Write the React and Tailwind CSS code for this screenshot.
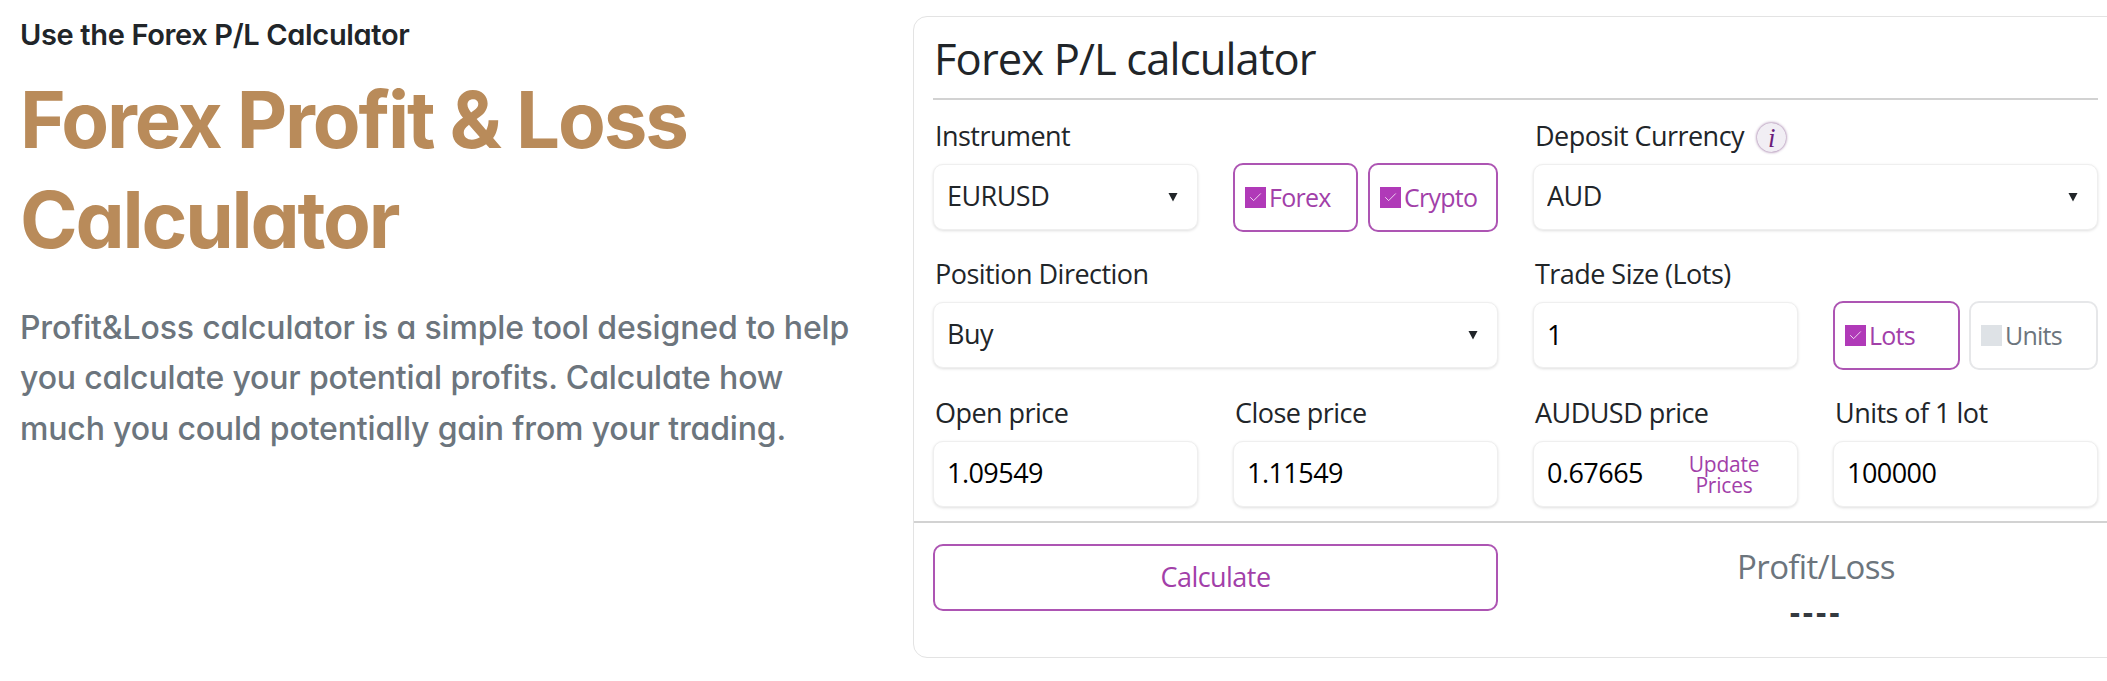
import React from "react";
import { Check } from "lucide-react";

const labelCls = "block h-[28px] pl-[2px] text-[27px] leading-[26px] text-[#212529] mb-[13px] whitespace-nowrap tracking-[-0.02em]";
const boxCls = "h-[66px] w-full rounded-[10px] border border-[#efefef] bg-white shadow-[0_1px_3px_rgba(0,0,0,0.13)] pl-[13px] pb-[2px] text-[27px] text-[#212529] outline-none tracking-[-0.02em]";

function Arrow() {
  return (
    <svg className="absolute right-[20px] top-[28px] pointer-events-none" width="10" height="10" viewBox="0 0 10 10">
      <polygon points="0.5,1 9.5,1 5,9.5" fill="#212529" />
    </svg>
  );
}

function SelectField({ label, value, options, extra }) {
  return (
    <div>
      <label className={labelCls}>
        {label}
        {extra}
      </label>
      <div className="relative">
        <select defaultValue={value} className={boxCls + " appearance-none"}>
          {options.map((o) => (
            <option key={o}>{o}</option>
          ))}
        </select>
        <Arrow />
      </div>
    </div>
  );
}

function InputField({ label, value }) {
  return (
    <div>
      <label className={labelCls}>{label}</label>
      <input defaultValue={value} className={boxCls + " text-black"} />
    </div>
  );
}

function Toggle({ label, checked, width }) {
  return (
    <label
      className={
        "flex items-center h-[69px] rounded-[10px] pl-[10px] text-[25px] tracking-[-0.03em] " +
        width +
        (checked
          ? " border-2 border-[#ad55b3] text-[#a23fa9]"
          : " border-2 border-[#e6e7e9] text-[#6c757d]")
      }
    >
      <span
        className={
          "flex items-center justify-center w-[21px] h-[21px] mr-[3px] " +
          (checked ? "bg-[#b03ab8]" : "bg-[#dee2e6]")
        }
      >
        {checked && <Check size={15} strokeWidth={1.25} className="text-white" />}
      </span>
      {label}
    </label>
  );
}

export default function App() {
  return (
    <div className="flex w-[2107px] h-[681px] overflow-hidden bg-white font-['Open_Sans',sans-serif]">
      <div className="w-[913px] shrink-0 pl-[20px] pt-[16px] font-['Inter',sans-serif] [font-feature-settings:'cv11']">
        <p className="text-[29px] leading-[38px] font-semibold text-[#212529] tracking-[-0.012em]">
          Use the Forex P/L Calculator
        </p>
        <h1 className="mt-[16px] text-[78px] leading-[100px] font-bold text-[#b98b5a] tracking-[-0.028em]">
          Forex Profit &amp; Loss
          <br />
          Calculator
        </h1>
        <p className="mt-[33px] w-[860px] text-[32px] leading-[50.4px] font-medium text-[#6c757d] tracking-[-0.005em]">
          Profit&amp;Loss calculator is a simple tool designed to help
          <br />
          you calculate your potential profits. Calculate how
          <br />
          much you could potentially gain from your trading.
        </p>
      </div>

      <div className="mt-[16px] h-[642px] w-[1300px] shrink-0 rounded-[14px] border border-[#e3e3e3]">
        <div className="ml-[19px] w-[1165px] h-[83px] border-b-2 border-[#d2d2d2] pl-[1px] text-[43.5px] leading-[84px] text-[#212529] tracking-[-0.02em]">
          Forex P/L calculator
        </div>

        <div className="ml-[19px] w-[1165px] mt-[23px] grid grid-cols-2 gap-x-[35px] gap-y-[31.25px]">
          <div className="grid grid-cols-2 gap-x-[35px] items-end">
            <SelectField label="Instrument" value="EURUSD" options={["EURUSD", "GBPUSD", "USDJPY"]} />
            <div className="flex gap-[10px] -mb-[2px]">
              <Toggle label="Forex" checked width="w-[125px]" />
              <Toggle label="Crypto" checked width="w-[130px]" />
            </div>
          </div>
          <SelectField
            label="Deposit Currency"
            value="AUD"
            options={["AUD", "USD", "EUR"]}
            extra={
              <span className="inline-flex items-center justify-center align-top ml-[13px] w-[29px] h-[29px] rounded-full bg-[#f1eef4] shadow-[0_0_3px_rgba(100,40,110,0.85)] font-['Liberation_Serif',serif] italic text-[27px] text-[#6b1d7a]">
                i
              </span>
            }
          />

          <SelectField label="Position Direction" value="Buy" options={["Buy", "Sell"]} />
          <div className="grid grid-cols-2 gap-x-[35px] items-end">
            <InputField label="Trade Size (Lots)" value="1" />
            <div className="flex gap-[9px] -mb-[2px]">
              <Toggle label="Lots" checked width="w-[127px]" />
              <Toggle label="Units" width="w-[129px]" />
            </div>
          </div>

          <div className="grid grid-cols-2 gap-x-[35px]">
            <InputField label="Open price" value="1.09549" />
            <InputField label="Close price" value="1.11549" />
          </div>
          <div className="grid grid-cols-2 gap-x-[35px]">
            <div>
              <label className={labelCls}>AUDUSD price</label>
              <div className="relative">
                <input defaultValue="0.67665" className={boxCls + " text-black"} />
                <button className="absolute right-[29px] top-[13px] w-[90px] text-center text-[21px] leading-[21px] text-[#a23fa9] tracking-[-0.01em]">
                  Update Prices
                </button>
              </div>
            </div>
            <InputField label="Units of 1 lot" value="100000" />
          </div>
        </div>

        <div className="mt-[14.5px] border-t-2 border-[#d2d2d2]">
          <div className="ml-[19px] w-[1165px] mt-[21px] grid grid-cols-2 gap-x-[35px]">
            <button className="h-[67px] rounded-[10px] border-2 border-[#ad55b3] text-[27px] text-[#a23fa9] tracking-[-0.02em]">
              Calculate
            </button>
            <div className="flex flex-col items-center pl-[1px]">
              <div className="mt-[1px] text-[33px] leading-[44px] text-[#6c757d] tracking-[-0.02em]">Profit/Loss</div>
              <div className="text-[32px] leading-[40px] mt-[3px] font-bold text-[#343a40] tracking-[0.09em]">----</div>
            </div>
          </div>
        </div>
      </div>
    </div>
  );
}
